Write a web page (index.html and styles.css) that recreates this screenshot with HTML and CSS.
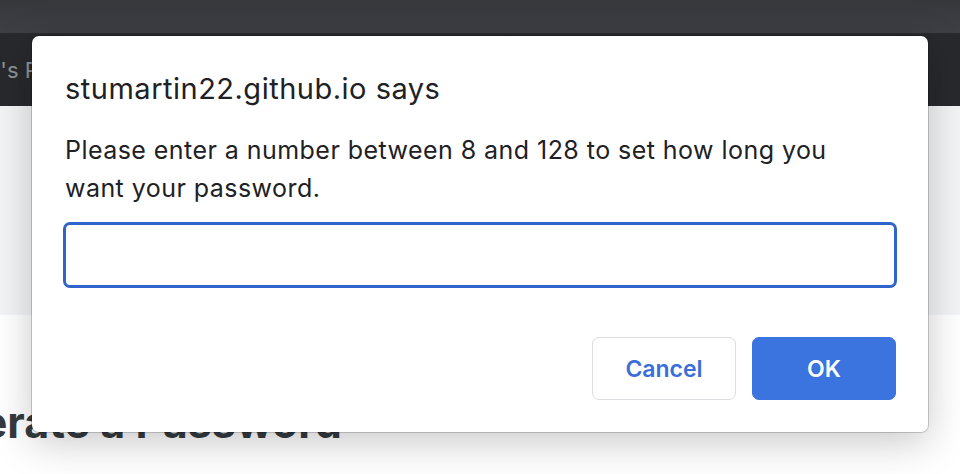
FILE: index.html
```html
<!DOCTYPE html>
<html>
<head>
<meta charset="utf-8">
<link rel="stylesheet" href="styles.css">
</head>
<body>
<div class="chrome"></div>
<header class="navbar"><span class="brand">Stu's Password Generator</span></header>
<section class="hero"></section>
<main class="main"><h1 class="heading">Generate a Password</h1></main>

<div class="dialog" role="dialog">
  <div class="dialog-title">stumartin22.github.io says</div>
  <div class="dialog-msg">Please enter a number between 8 and 128 to set how long you want your password.</div>
  <input class="dialog-input" type="text">
  <div class="dialog-actions">
    <button class="btn btn-cancel">Cancel</button>
    <button class="btn btn-ok">OK</button>
  </div>
</div>
</body>
</html>
```
FILE: styles.css
```css
* { box-sizing: border-box; }
html, body { margin: 0; padding: 0; }
body {
  width: 960px;
  height: 474px;
  overflow: hidden;
  background: #ffffff;
  font-family: "Inter", "Liberation Sans", sans-serif;
  position: relative;
}
.chrome {
  height: 34px;
  background: linear-gradient(#36383c, #3d3f44);
  border-bottom: 1px solid #2a2c30;
}
.navbar {
  height: 72px;
  background: #27292d;
  display: flex;
  align-items: center;
  overflow: hidden;
}
.brand {
  color: #8f9195;
  font-size: 22px;
  white-space: nowrap;
  margin-left: -34px;
}
.hero {
  height: 209px;
  background: #f3f4f6;
}
.main {
  overflow: hidden;
}
.heading {
  margin: 83px 0 0 -103px;
  font-size: 43px;
  font-weight: 700;
  color: #343a40;
  white-space: nowrap;
  line-height: 48px;
}
.dialog {
  position: absolute;
  left: 32px;
  top: 36px;
  width: 896px;
  height: 396px;
  background: #ffffff;
  border-radius: 7px;
  box-shadow: 0 0 0 1px rgba(0,0,0,0.18), 0 10px 40px rgba(0,0,0,0.22);
  padding: 35px 31px 32px 31px;
  display: flex;
  flex-direction: column;
}
.dialog-title {
  font-size: 29px;
  line-height: 36px;
  letter-spacing: 0.5px;
  color: #202124;
  margin-left: 2px;
  white-space: nowrap;
}
.dialog-msg {
  font-size: 25px;
  line-height: 38px;
  letter-spacing: 0.45px;
  color: #202124;
  margin: 24px 0 0 2px;
  max-width: 800px;
}
.dialog-input {
  margin-top: 15px;
  height: 66px;
  width: 100%;
  flex-shrink: 0;
  border: 3px solid #2e64cb;
  border-radius: 7px;
  outline: none;
  font: inherit;
}
.dialog-actions {
  margin-top: auto;
  display: flex;
  justify-content: flex-end;
  gap: 16px;
  padding-right: 1px;
}
.btn {
  width: 144px;
  height: 63px;
  border-radius: 7px;
  font-family: inherit;
  font-size: 23px;
  font-weight: 600;
}
.btn-cancel {
  background: #ffffff;
  border: 1px solid #dadce0;
  color: #3a6fd9;
}
.btn-ok {
  background: #3b73df;
  border: 1px solid #3b73df;
  color: #ffffff;
}
```
